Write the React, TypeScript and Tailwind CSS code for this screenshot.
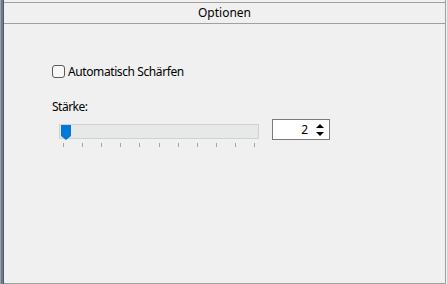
import React from "react";

const ticks = Array.from({ length: 11 }, (_, i) => i);

export default function App() {
  return (
    <div
      className="w-[447px] h-[284px] bg-[#f0f0f0] flex text-[12px] text-black overflow-hidden"
      style={{ fontFamily: '"Noto Sans", "Open Sans", sans-serif' }}
    >
      <div className="flex h-full">
        <div className="w-[1px] bg-[#9aa2ad]" />
        <div className="w-[2px] bg-[#6e7886]" />
        <div className="w-[1px] bg-[#525b68]" />
      </div>
      <div className="w-[442px] h-[284px] border-r border-b border-[#a0a0a0] flex flex-col pt-[2px]">
        <div className="h-[22px] border-t border-b border-[#a0a0a0] flex items-center justify-center leading-[16px]">
          Optionen
        </div>
        <div className="pl-[48px] pt-[41px] flex flex-col">
          <div className="flex items-center h-[13px] gap-[3px]">
            <div className="w-[13px] h-[13px] rounded-[3px] border border-[#5a5a5a] bg-[#f7f7f7]" />
            <span className="leading-[16px] tracking-[-0.4px]">Automatisch Schärfen</span>
          </div>
          <div className="mt-[21px] leading-[16px] tracking-[-0.5px]">Stärke:</div>
          <div className="mt-[4px] flex items-start">
            <div className="ml-[7px] w-[200px] flex flex-col mt-[5px]">
              <div className="relative h-[15px] bg-[#e7e9e9] border border-[#d2d2d2]">
                <svg
                  className="absolute left-[1px] top-0"
                  width="10"
                  height="15"
                  viewBox="0 0 10 15"
                >
                  <path d="M0 0H10V11L5 15L0 11Z" fill="#0078d7" />
                </svg>
              </div>
              <div className="relative h-[9px]">
                {ticks.map((i) => (
                  <div
                    key={i}
                    className="absolute top-[4px] w-[1px] h-[4px] bg-[#a6a6a6]"
                    style={{ left: `${4 + Math.round(i * 19.1)}px` }}
                  />
                ))}
              </div>
            </div>
            <div className="ml-[13px] w-[58px] h-[21px] bg-white border border-[#7a7a7a] flex items-center">
              <div className="flex-1 text-right pr-[5px] leading-[16px]">2</div>
              <div className="w-[16px] h-full flex flex-col items-center justify-center gap-[4px] pr-[3px]">
                <svg width="8" height="4" viewBox="0 0 8 4">
                  <path d="M4 0L8 4H0Z" fill="#000" />
                </svg>
                <svg width="8" height="4" viewBox="0 0 8 4">
                  <path d="M0 0H8L4 4Z" fill="#000" />
                </svg>
              </div>
            </div>
          </div>
        </div>
      </div>
    </div>
  );
}
